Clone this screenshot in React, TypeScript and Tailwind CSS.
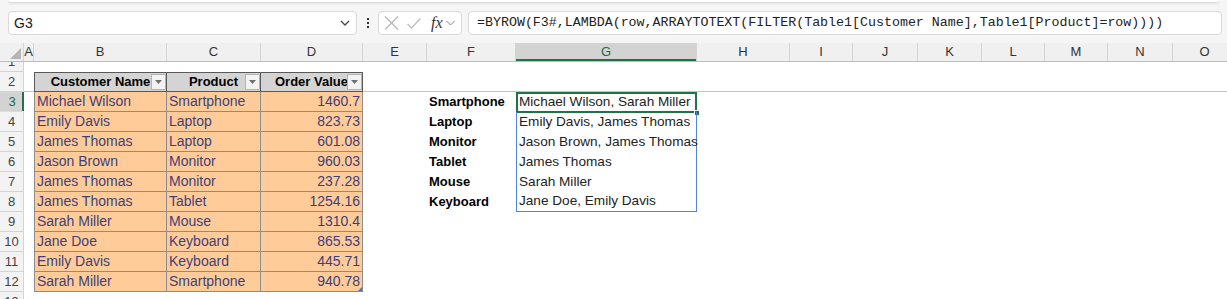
const cols = [
  { l: "A", w: "w-[10px]" },
  { l: "B", w: "w-[133px]" },
  { l: "C", w: "w-[94px]" },
  { l: "D", w: "w-[102px]" },
  { l: "E", w: "w-[64px]" },
  { l: "F", w: "w-[89px]" },
  { l: "G", w: "w-[181px]" },
  { l: "H", w: "w-[93px]" },
  { l: "I", w: "w-[63px]" },
  { l: "J", w: "w-[65px]" },
  { l: "K", w: "w-[64px]" },
  { l: "L", w: "w-[63px]" },
  { l: "M", w: "w-[63px]" },
  { l: "N", w: "w-[65px]" },
  { l: "O", w: "w-[64px]" },
];

const orders: [string, string, string][] = [
  ["Michael Wilson", "Smartphone", "1460.7"],
  ["Emily Davis", "Laptop", "823.73"],
  ["James Thomas", "Laptop", "601.08"],
  ["Jason Brown", "Monitor", "960.03"],
  ["James Thomas", "Monitor", "237.28"],
  ["James Thomas", "Tablet", "1254.16"],
  ["Sarah Miller", "Mouse", "1310.4"],
  ["Jane Doe", "Keyboard", "865.53"],
  ["Emily Davis", "Keyboard", "445.71"],
  ["Sarah Miller", "Smartphone", "940.78"],
];

const spill: [string, string][] = [
  ["Smartphone", "Michael Wilson, Sarah Miller"],
  ["Laptop", "Emily Davis, James Thomas"],
  ["Monitor", "Jason Brown, James Thomas"],
  ["Tablet", "James Thomas"],
  ["Mouse", "Sarah Miller"],
  ["Keyboard", "Jane Doe, Emily Davis"],
];

function RowHead({ n, active }: { n: number; active?: boolean }) {
  return (
    <div
      className={
        active
          ? "flex h-full w-[24px] shrink-0 items-center justify-center border-b border-[#dcdcdc] bg-[#d3d3d3] text-[13px] text-[#1d6b41] shadow-[inset_-2px_0_0_#217346]"
          : "flex h-full w-[24px] shrink-0 items-center justify-center border-r border-b border-[#d4d4d4] bg-[#f3f3f3] text-[13px] text-[#444]"
      }
    >
      {n}
    </div>
  );
}

function FilterButton() {
  return (
    <div className="absolute top-[1px] right-0 flex h-[16px] w-[15px] items-center justify-center border border-[#b4b4b4] bg-[#f3f3f3]">
      <svg width="7" height="4" viewBox="0 0 7 4">
        <polygon points="0,0 7,0 3.5,4" fill="#707070" />
      </svg>
    </div>
  );
}

function HeaderCell({ label, w, left }: { label: string; w: string; left?: boolean }) {
  return (
    <div
      className={
        left
          ? "relative flex h-full items-center justify-center overflow-hidden border-y border-r border-l border-[#595959] bg-[#d4d4d4] text-[13px] font-bold whitespace-nowrap text-black " + w
          : "relative flex h-full items-center justify-center overflow-hidden border-y border-r border-[#595959] bg-[#d4d4d4] text-[13px] font-bold whitespace-nowrap text-black " + w
      }
    >
      {label}
      <FilterButton />
    </div>
  );
}

export default function App() {
  return (
    <div className="h-[299px] w-[1227px] overflow-hidden bg-white font-['Liberation_Sans',Arial,sans-serif]">
      {/* formula bar */}
      <div className="h-[43px] bg-[#f5f5f5]">
        <div className="mx-2 h-[3px] rounded-b-md border-b border-[#dedede] bg-white shadow-[0_1px_2px_rgba(0,0,0,0.08)]" />
        <div className="mt-[8px] flex h-[24px] items-center">
          <div className="ml-2 flex h-[24px] w-[349px] items-center justify-between rounded-[4px] border border-[#d9d9d9] bg-white pr-[6px] pl-[5px]">
            <span className="text-[14px] text-[#222]">G3</span>
            <svg width="10" height="6" viewBox="0 0 10 6">
              <polyline points="1,1 5,5 9,1" fill="none" stroke="#444" strokeWidth="1.3" />
            </svg>
          </div>
          <div className="ml-[9px] flex w-[3px] flex-col items-center gap-[2px]">
            <span className="h-[2px] w-[2px] bg-[#333]" />
            <span className="h-[2px] w-[2px] bg-[#333]" />
            <span className="h-[2px] w-[2px] bg-[#333]" />
          </div>
          <div className="ml-[9px] flex h-[24px] w-[84px] items-center rounded-[4px] border border-[#d9d9d9] bg-white pl-[5px]">
            <svg width="15" height="14" viewBox="0 0 15 14">
              <line x1="1" y1="0.5" x2="14" y2="13.5" stroke="#b8b8b8" strokeWidth="1.2" />
              <line x1="14" y1="0.5" x2="1" y2="13.5" stroke="#b8b8b8" strokeWidth="1.2" />
            </svg>
            <svg className="ml-[8px]" width="14" height="11" viewBox="0 0 14 11">
              <polyline points="0.5,6 4.5,10 13.5,0.5" fill="none" stroke="#b8b8b8" strokeWidth="1.2" />
            </svg>
            <span className="ml-[10px] font-['Liberation_Serif',serif] text-[16px] leading-none text-[#333] italic">fx</span>
            <svg className="ml-[3px]" width="9" height="6" viewBox="0 0 9 6">
              <polyline points="0.5,1 4.5,5 8.5,1" fill="none" stroke="#888" strokeWidth="1" />
            </svg>
          </div>
          <div className="mr-[5px] ml-[6px] flex h-[24px] flex-1 items-center rounded-[4px] border border-[#d9d9d9] bg-white pl-[8px] font-['Liberation_Mono',monospace] text-[13.3px] whitespace-nowrap text-[#222]">
            =BYROW(F3#,LAMBDA(row,ARRAYTOTEXT(FILTER(Table1[Customer Name],Table1[Product]=row))))
          </div>
        </div>
      </div>

      {/* column headers */}
      <div className="flex h-[19px] border-b border-[#bdbdbd] bg-[#f0f0f0]">
        <div className="flex h-full w-[24px] shrink-0 items-end justify-end border-r border-[#d4d4d4] pr-[2px] pb-[2px]">
          <svg width="11" height="11" viewBox="0 0 11 11">
            <polygon points="11,0 11,11 0,11" fill="#b5b5b5" />
          </svg>
        </div>
        {cols.map((c) => (
          <div
            key={c.l}
            className={
              c.l === "G"
                ? "flex h-full shrink-0 items-center justify-center border-r border-[#d4d4d4] bg-[#d3d3d3] text-[13px] text-[#1d6b41] shadow-[inset_0_-2px_0_#217346] " + c.w
                : "flex h-full shrink-0 items-center justify-center border-r border-[#d4d4d4] text-[13px] text-[#333] " + c.w
            }
          >
            {c.l}
          </div>
        ))}
      </div>

      {/* row 1 */}
      <div className="flex h-[10px]">
        <div className="h-full w-[24px] shrink-0 overflow-hidden border-r border-b border-[#d4d4d4] bg-[#f3f3f3]">
          <div className="-mt-[10px] flex h-[20px] items-center justify-center text-[13px] text-[#444]">1</div>
        </div>
      </div>

      {/* row 2: table header + frozen line */}
      <div className="flex h-[20px]">
        <RowHead n={2} />
        <div className="h-full w-[10px] shrink-0 border-b border-[#c4c4c4]" />
        <HeaderCell label="Customer Name" w="w-[133px]" left />
        <HeaderCell label="Product" w="w-[94px]" />
        <HeaderCell label="Order Value" w="w-[102px]" />
        <div className="h-full flex-1 border-b border-[#c4c4c4]" />
      </div>

      {/* rows 3-12 */}
      {orders.map((o, i) => {
        const r = i + 3;
        const s = spill[i];
        return (
          <div key={r} className="flex h-[20px] text-[14px]">
            <RowHead n={r} active={r === 3} />
            <div className="h-full w-[10px] shrink-0" />
            <div className="flex h-full w-[133px] shrink-0 items-center border-r border-b border-l border-[#8c8c8c] bg-[#ffcc99] pl-[2px] whitespace-nowrap text-[#3f3f76]">
              {o[0]}
            </div>
            <div className="flex h-full w-[94px] shrink-0 items-center border-r border-b border-[#8c8c8c] bg-[#ffcc99] pl-[2px] whitespace-nowrap text-[#3f3f76]">
              {o[1]}
            </div>
            <div className="relative flex h-full w-[102px] shrink-0 items-center justify-end border-r border-b border-[#8c8c8c] bg-[#ffcc99] pr-[2px] whitespace-nowrap text-[#3f3f76]">
              {o[2]}
              {r === 12 && <span className="absolute right-0 bottom-0 h-[4px] w-[4px] bg-[#4472c4] [clip-path:polygon(100%_0,100%_100%,0_100%)]" />}
            </div>
            <div className="h-full w-[64px] shrink-0" />
            <div className="flex h-full w-[89px] shrink-0 items-center pl-[2px] text-[13px] font-bold whitespace-nowrap text-black">
              {s ? s[0] : ""}
            </div>
            {s ? (
              <div
                className={
                  r === 3
                    ? "relative flex h-full w-[181px] shrink-0 items-center border-x border-t border-[#4f86d9] pl-[2px] text-[13.6px] whitespace-nowrap text-[#222]"
                    : r === 8
                      ? "relative flex h-full w-[181px] shrink-0 items-center border-x border-b border-[#4f86d9] pl-[2px] text-[13.6px] whitespace-nowrap text-[#222]"
                      : "relative flex h-full w-[181px] shrink-0 items-center border-x border-[#4f86d9] pl-[2px] text-[13.6px] whitespace-nowrap text-[#222]"
                }
              >
                {s[1]}
                {r === 3 && (
                  <>
                    <span className="absolute -inset-[1px] border-2 border-[#217346]" />
                    <span className="absolute -right-[4px] -bottom-[4px] h-[6px] w-[6px] border border-white bg-[#217346]" />
                  </>
                )}
              </div>
            ) : (
              <div className="h-full w-[181px] shrink-0" />
            )}
          </div>
        );
      })}
      <div className="flex h-[20px]">
        <RowHead n={13} />
      </div>
    </div>
  );
}
